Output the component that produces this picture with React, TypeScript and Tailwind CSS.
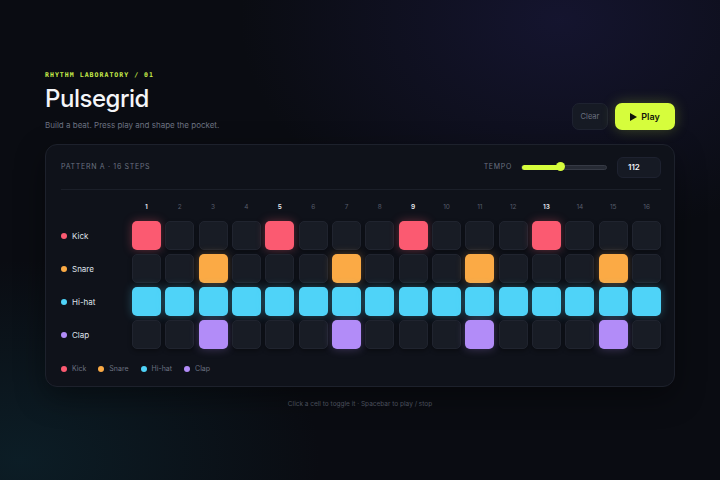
import React, { useState } from "react";

type Track = { name: string; dot: string; on: string; glow: string; steps: number[] };

const tracks: Track[] = [
  { name: "Kick", dot: "bg-[#fb5a71]", on: "bg-[#fb5a71]", glow: "shadow-[0_0_10px_rgba(251,90,113,0.35)]", steps: [0, 4, 8, 12] },
  { name: "Snare", dot: "bg-[#fbaa45]", on: "bg-[#fbaa45]", glow: "shadow-[0_0_10px_rgba(251,170,69,0.3)]", steps: [2, 6, 10, 14] },
  { name: "Hi-hat", dot: "bg-[#4fd3f8]", on: "bg-[#4fd3f8]", glow: "shadow-[0_0_10px_rgba(79,211,248,0.3)]", steps: [0, 1, 2, 3, 4, 5, 6, 7, 8, 9, 10, 11, 12, 13, 14, 15] },
  { name: "Clap", dot: "bg-[#b28cf8]", on: "bg-[#b28cf8]", glow: "shadow-[0_0_10px_rgba(178,140,248,0.3)]", steps: [2, 6, 10, 14] },
];

const mono = "font-['DejaVu_Sans_Mono',monospace]";

export default function App() {
  const [grid, setGrid] = useState(() => tracks.map((t) => Array.from({ length: 16 }, (_, i) => t.steps.includes(i))));

  const toggle = (r: number, c: number) => {
    setGrid((g) => g.map((row, ri) => (ri === r ? row.map((v, ci) => (ci === c ? !v : v)) : row)));
  };

  return (
    <div className="relative w-[720px] h-[480px] overflow-hidden bg-[#0a0c12] font-['Inter',sans-serif] text-white">
      <div className="absolute inset-0 bg-[radial-gradient(ellipse_320px_220px_at_560px_20px,rgba(40,36,100,0.35),transparent)]" />
      <div className="absolute inset-0 bg-[radial-gradient(ellipse_300px_200px_at_20px_460px,rgba(14,50,62,0.45),transparent)]" />

      <div className="relative px-[45px] pt-[71px]">
        <div className="flex items-end justify-between">
          <div>
            <p className={`${mono} text-[6.5px] font-bold tracking-[0.16em] text-[#c8ee4a] leading-[8px]`}>RHYTHM LABORATORY / 01</p>
            <h1 className="mt-[3px] text-[24px] font-medium tracking-[-0.02em] leading-[34px] text-[#f4f5f8]">Pulsegrid</h1>
            <p className="mt-[4px] text-[8px] text-[#6b7180] leading-[10px]">Build a beat. Press play and shape the pocket.</p>
          </div>
          <div className="flex gap-[7px]">
            <button className="h-[27px] w-[36px] rounded-[7px] bg-[#161a24] border border-[#1e2230] text-[7.5px] text-[#6b7180]">Clear</button>
            <button className="h-[27px] w-[60px] rounded-[7px] bg-[#d6fd3c] text-[#11140a] text-[9px] font-semibold flex items-center justify-center gap-[4px] shadow-[0_0_14px_rgba(214,253,60,0.25)]">
              <svg width="7" height="8" viewBox="0 0 7 8"><path d="M0 0L7 4L0 8Z" fill="#11140a" /></svg>
              Play
            </button>
          </div>
        </div>

        <div className="mt-[14px] rounded-[12px] border border-[#1d212c] bg-[#0f121a] shadow-[0_10px_30px_rgba(0,0,0,0.4)] pl-[15px] pr-[13px]">
          <div className="flex items-center h-[45px] border-b border-[#1b1f29]">
            <p className="text-[7px] tracking-[0.1em] text-[#6b7180]">PATTERN A · 16 STEPS</p>
            <div className="ml-auto flex items-center">
              <span className="text-[7px] tracking-[0.1em] text-[#6b7180]">TEMPO</span>
              <div className="relative ml-[9px] w-[86px] h-[5px] rounded-full bg-[#262a34] border border-[#363a45]">
                <div className="absolute left-0 top-[-1px] h-[5px] w-[38px] rounded-full bg-[#d6fd3c]" />
                <div className="absolute left-[34px] top-[-3.5px] w-[9px] h-[9px] rounded-full bg-[#d6fd3c]" />
              </div>
              <div className="ml-[10px] w-[44px] h-[21px] rounded-[6px] bg-[#161a24] border border-[#1e2230] flex items-center pl-[10px] text-[8px] font-semibold text-[#f0f1f4]">112</div>
            </div>
          </div>

          <div className="pt-[11px] pb-[11px]">
            <div className="flex">
              <div className="w-[71px] shrink-0" />
              <div className="grid grid-cols-16 gap-x-[4.5px] flex-1">
                {Array.from({ length: 16 }, (_, i) => (
                  <div key={i} className={`text-center text-[6.5px] leading-[12px] ${i % 4 === 0 ? "text-[#e6e8ee] font-semibold" : "text-[#565c6a]"}`}>{i + 1}</div>
                ))}
              </div>
            </div>

            <div className="mt-[8px] flex flex-col gap-[4px]">
              {tracks.map((t, r) => (
                <div key={t.name} className="flex items-center">
                  <div className="w-[71px] shrink-0 flex items-center gap-[5px]">
                    <span className={`w-[6px] h-[6px] rounded-full ${t.dot}`} />
                    <span className="text-[8px] text-[#dfe2ea]">{t.name}</span>
                  </div>
                  <div className="grid grid-cols-16 gap-x-[4.5px] flex-1">
                    {grid[r].map((on, c) => (
                      <button
                        key={c}
                        onClick={() => toggle(r, c)}
                        className={`h-[29px] rounded-[5px] ${on ? `${t.on} ${t.glow}` : "bg-[#181c25] border border-[#20242f] shadow-[0_2px_4px_rgba(0,0,0,0.35)]"}`}
                      />
                    ))}
                  </div>
                </div>
              ))}
            </div>

            <div className="mt-[14px] flex items-center gap-[12px] h-[12px]">
              {tracks.map((t) => (
                <div key={t.name} className="flex items-center gap-[5px]">
                  <span className={`w-[6px] h-[6px] rounded-full ${t.dot}`} />
                  <span className="text-[7px] text-[#6b7180]">{t.name}</span>
                </div>
              ))}
            </div>
          </div>
        </div>

        <p className="mt-[13px] text-center text-[6.5px] text-[#4a4f5c]">Click a cell to toggle it · Spacebar to play / stop</p>
      </div>
    </div>
  );
}
